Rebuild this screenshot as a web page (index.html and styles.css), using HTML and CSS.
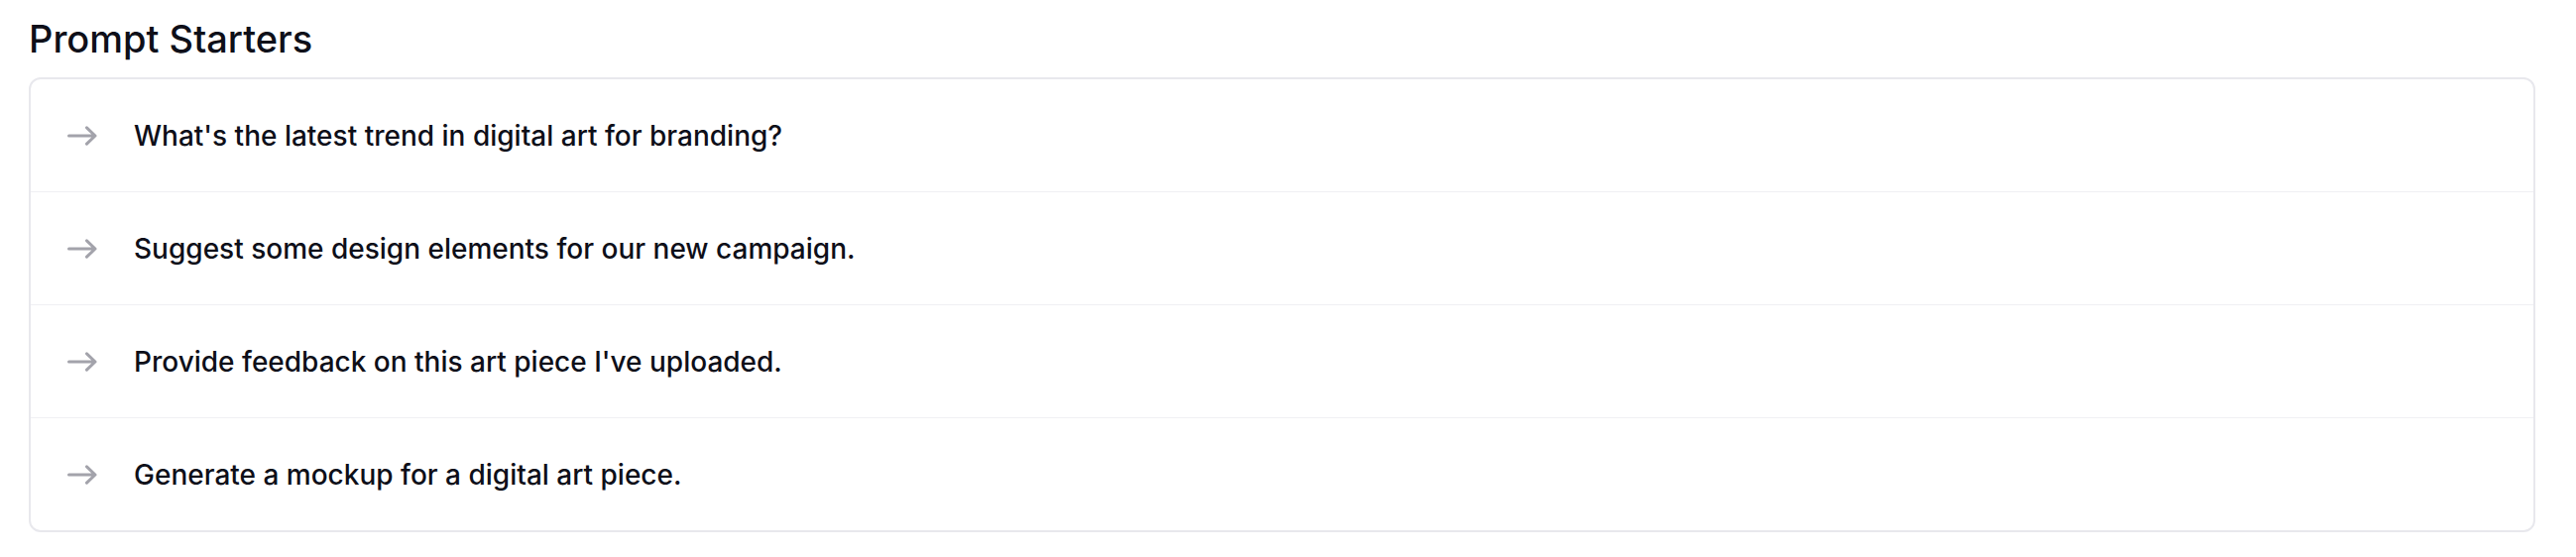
FILE: index.html
```html
<!DOCTYPE html>
<html lang="en">
<head>
<meta charset="utf-8">
<title>Prompt Starters</title>
<link rel="stylesheet" href="styles.css">
</head>
<body>
<section class="starters">
  <h2 class="starters-title">Prompt Starters</h2>
  <div class="starters-card">
    <div class="starter-row">
      <svg class="starter-arrow" viewBox="0 0 30 20" width="30" height="20" aria-hidden="true"><path d="M1.5 10H28M19.5 1.8L28 10L19.5 18.2" fill="none" stroke="currentColor" stroke-width="3" stroke-linecap="round" stroke-linejoin="round"/></svg>
      <span class="starter-text">What's the latest trend in digital art for branding?</span>
    </div>
    <div class="starter-row">
      <svg class="starter-arrow" viewBox="0 0 30 20" width="30" height="20" aria-hidden="true"><path d="M1.5 10H28M19.5 1.8L28 10L19.5 18.2" fill="none" stroke="currentColor" stroke-width="3" stroke-linecap="round" stroke-linejoin="round"/></svg>
      <span class="starter-text">Suggest some design elements for our new campaign.</span>
    </div>
    <div class="starter-row">
      <svg class="starter-arrow" viewBox="0 0 30 20" width="30" height="20" aria-hidden="true"><path d="M1.5 10H28M19.5 1.8L28 10L19.5 18.2" fill="none" stroke="currentColor" stroke-width="3" stroke-linecap="round" stroke-linejoin="round"/></svg>
      <span class="starter-text">Provide feedback on this art piece I've uploaded.</span>
    </div>
    <div class="starter-row">
      <svg class="starter-arrow" viewBox="0 0 30 20" width="30" height="20" aria-hidden="true"><path d="M1.5 10H28M19.5 1.8L28 10L19.5 18.2" fill="none" stroke="currentColor" stroke-width="3" stroke-linecap="round" stroke-linejoin="round"/></svg>
      <span class="starter-text">Generate a mockup for a digital art piece.</span>
    </div>
  </div>
</section>
</body>
</html>
```
FILE: styles.css
```css
html, body {
  margin: 0;
  padding: 0;
  background: #ffffff;
}

body {
  font-family: Inter, "Liberation Sans", sans-serif;
  color: #0e0f19;
}

.starters {
  padding: 15px 41px 0 29px;
}

.starters-title {
  margin: 0 0 15px 0;
  font-size: 38px;
  line-height: 48px;
  font-weight: 500;
  color: #0e0f19;
  letter-spacing: 0;
}

.starters-card {
  border: 2px solid #e8e8ed;
  border-radius: 12px;
  display: flex;
  flex-direction: column;
  overflow: hidden;
}

.starter-row {
  height: 113px;
  display: flex;
  align-items: center;
  gap: 37px;
  padding-left: 37px;
  box-sizing: border-box;
}

.starter-row + .starter-row {
  border-top: 1px solid #f0f0f3;
  height: 114px;
}

.starter-arrow {
  flex: none;
  color: #a3a3ab;
}

.starter-text {
  font-size: 28px;
  font-weight: 500;
  line-height: 40px;
  letter-spacing: 0;
  color: #0e0f19;
}
```
